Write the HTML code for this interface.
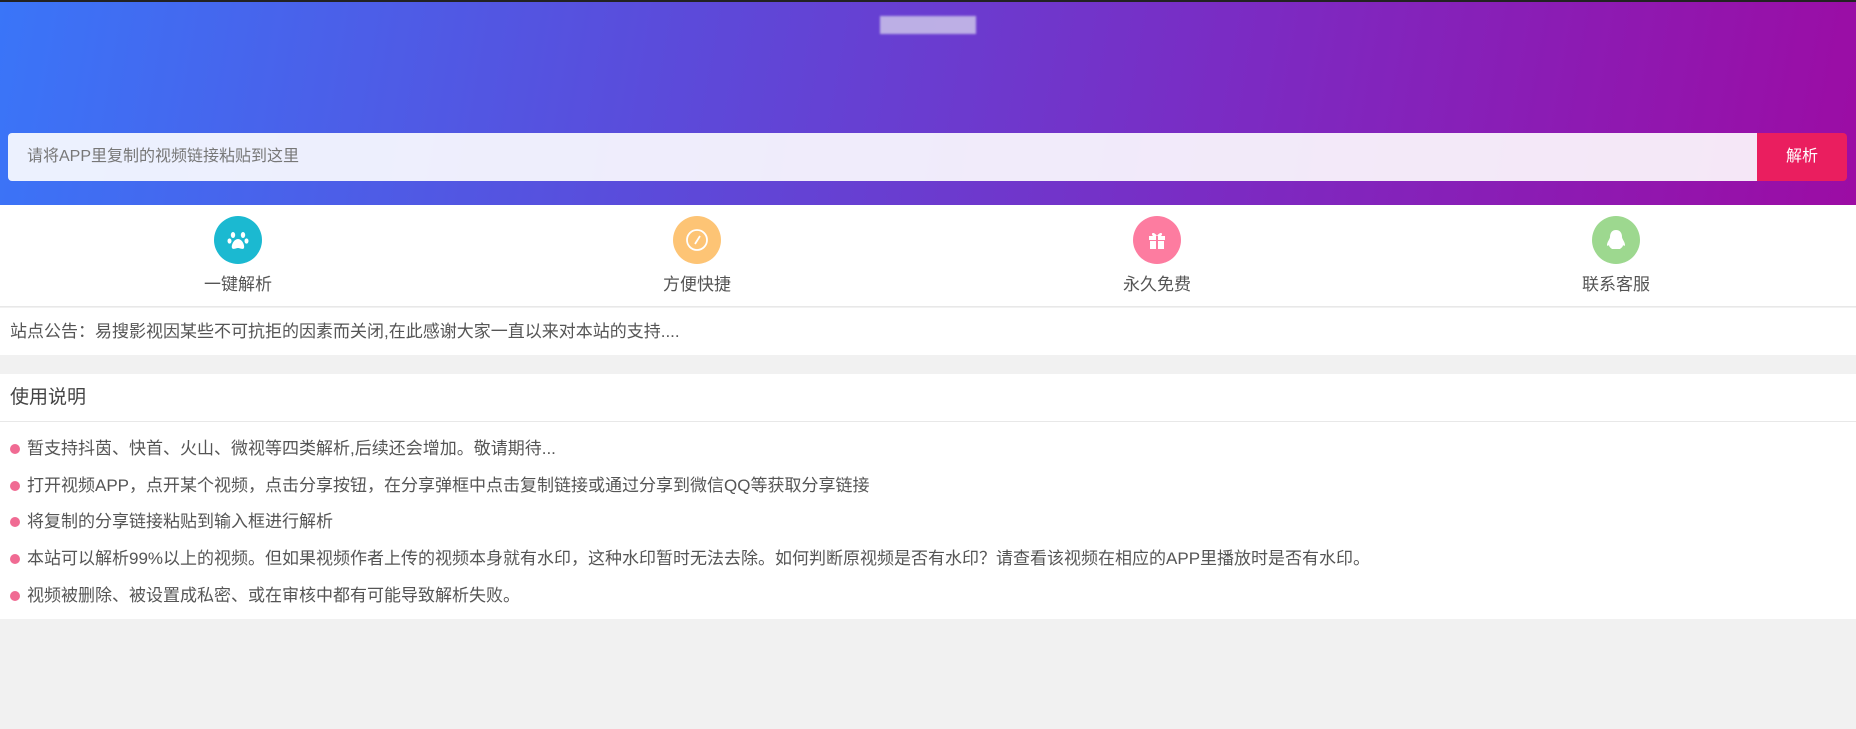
<!DOCTYPE html>
<html><head><meta charset="utf-8"><style>
*{margin:0;padding:0;box-sizing:border-box}
body{width:1856px;height:729px;background:#f1f1f1;font-family:"Liberation Sans","Noto Sans CJK SC",sans-serif;color:#555;overflow:hidden;position:relative}
.hdr{position:absolute;left:0;top:0;width:1856px;height:205px;background:linear-gradient(100deg,#3a75f8 0%,#5a4cdb 35%,#7a2cc4 65%,#9c0ca4 100%);border-top:2px solid #222}
.logo{position:absolute;left:880px;top:14px;width:96px;height:18px;background:#c6bce8;opacity:.9;filter:blur(1px)}
.inp{position:absolute;left:8px;top:133px;width:1750px;height:48px;background:rgba(255,255,255,.9);border-radius:4px 0 0 4px;font-size:16px;color:#777;line-height:48px;padding-left:19px}
.btn{position:absolute;left:1757px;top:133px;width:90px;height:48px;background:#ea1e5f;border-radius:0 4px 4px 0;color:#fff;font-size:16px;line-height:48px;text-align:center}
.feat{position:absolute;top:205px;left:0;width:1856px;height:102px;background:#fff;border-bottom:1px solid #e8e8e8}
.f{position:absolute;top:11px;width:200px;margin-left:-100px;text-align:center;font-size:17px;color:#555}
.c{width:48px;height:48px;border-radius:50%;margin:0 auto 6px;display:flex;align-items:center;justify-content:center}
.ann{position:absolute;top:308px;left:0;width:1856px;height:47px;background:#fff;font-size:17px;line-height:48px;padding-left:10px}
.use{position:absolute;top:374px;left:0;width:1856px;height:245px;background:#fff}
.t{height:48px;border-bottom:1px solid #e8e8e8;font-size:19px;line-height:48px;padding-left:10px;color:#444}
.li{position:absolute;left:10px;font-size:17px;height:22px;line-height:22px;padding-left:17px;white-space:nowrap}
.li:before{content:"";position:absolute;left:0;top:6px;width:10px;height:10px;border-radius:50%;background:#f06b93}
</style></head><body>
<div class="hdr"><div class="logo"></div></div>
<div class="inp">请将APP里复制的视频链接粘贴到这里</div>
<div class="btn">解析</div>
<div class="feat">
<div class="f" style="left:238px"><div class="c" style="background:#1bb9d1"><svg width="22" height="22" viewBox="0 0 22 22" fill="#fff"><ellipse cx="6" cy="6" rx="2.2" ry="3"/><ellipse cx="16" cy="6" rx="2.2" ry="3"/><ellipse cx="2.5" cy="12" rx="2" ry="2.6"/><ellipse cx="19.5" cy="12" rx="2" ry="2.6"/><path d="M11 10c-4 0-7 6-6 9 1 2 4 0 6 0s5 2 6 0c1-3-2-9-6-9z"/></svg></div>一键解析</div>
<div class="f" style="left:697px"><div class="c" style="background:#fdc475"><svg width="26" height="26" viewBox="0 0 26 26" fill="none" stroke="#fff" stroke-width="1.8"><circle cx="13" cy="13" r="10"/><path d="M16 9l-5 8"/></svg></div>方便快捷</div>
<div class="f" style="left:1157px"><div class="c" style="background:#fd7ca0"><svg width="22" height="22" viewBox="0 0 22 22" fill="#fff"><rect x="3" y="7" width="16" height="4"/><rect x="4" y="12" width="14" height="8"/><rect x="10" y="7" width="2" height="13" fill="#fd7ca0"/><path d="M11 7C8 2 4 4 7 7zM11 7c3-5 7-3 4 0z"/></svg></div>永久免费</div>
<div class="f" style="left:1616px"><div class="c" style="background:#9dd88f"><svg width="22" height="24" viewBox="0 0 22 24" fill="#fff"><path d="M11 2c-4 0-6 3-6 7 0 2-3 5-3 8 0 1 1 1 2 0 0 2 2 3 3 4h8c1-1 3-2 3-4 1 1 2 1 2 0 0-3-3-6-3-8 0-4-2-7-6-7z"/></svg></div>联系客服</div>
</div>
<div class="ann">站点公告：易搜影视因某些不可抗拒的因素而关闭,在此感谢大家一直以来对本站的支持....</div>
<div class="use"><div class="t">使用说明</div>
<div class="li" style="top:64px">暂支持抖茵、快首、火山、微视等四类解析,后续还会增加。敬请期待...</div>
<div class="li" style="top:101px">打开视频APP，点开某个视频，点击分享按钮，在分享弹框中点击复制链接或通过分享到微信QQ等获取分享链接</div>
<div class="li" style="top:137px">将复制的分享链接粘贴到输入框进行解析</div>
<div class="li" style="top:174px">本站可以解析99%以上的视频。但如果视频作者上传的视频本身就有水印，这种水印暂时无法去除。如何判断原视频是否有水印？请查看该视频在相应的APP里播放时是否有水印。</div>
<div class="li" style="top:211px">视频被删除、被设置成私密、或在审核中都有可能导致解析失败。</div>
</div>
</body></html>
